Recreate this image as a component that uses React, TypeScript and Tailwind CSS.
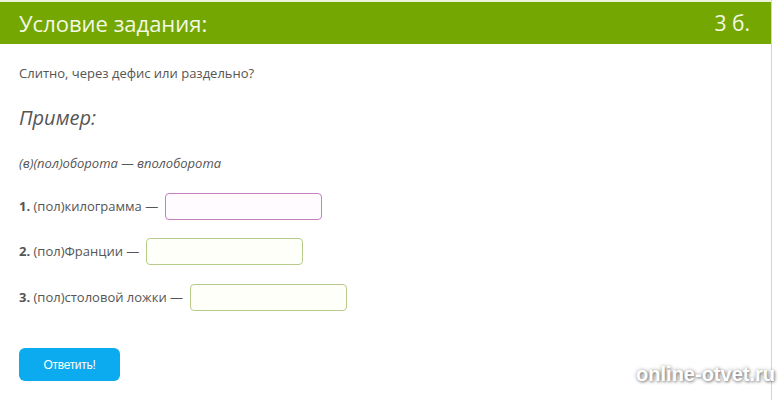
import React from "react";

export default function App() {
  const font = { fontFamily: '"Open Sans", "Noto Sans", sans-serif' };
  return (
    <div className="w-[781px] h-[400px] bg-white relative overflow-hidden" style={font}>
      <div className="w-[772px] h-[400px] border-r border-[#d4d4d4] flex flex-col">
        <div className="h-[2px] bg-[#eef3dc]" />
        <div className="h-[42px] bg-[#74a702] flex items-center justify-between pl-[19px] pr-[21px] text-[#f3f8e6]">
          <span className="text-[22px] leading-none">Условие задания:</span>
          <span className="text-[21px] leading-none">3 б.</span>
        </div>
        <div className="pl-[19px] flex flex-col text-[#555555]">
          <div className="mt-[20px] h-[18px] text-[13px] leading-[18px]">Слитно, через дефис или раздельно?</div>
          <div className="mt-[22px] h-[28px] text-[20px] italic leading-[28px]">Пример:</div>
          <div className="mt-[23px] h-[16px] text-[13px] italic leading-[16px]">(в)(пол)оборота — вполоборота</div>
          <div className="mt-[22px] flex items-center gap-[7px] text-[13px] h-[27px]">
            <span><b className="font-bold">1.</b> (пол)килограмма —</span>
            <div className="w-[157px] h-[27px] rounded-[4px] border border-[#c77fbf] bg-[#fffbfe]" />
          </div>
          <div className="mt-[18px] flex items-center gap-[7px] text-[13px] h-[27px]">
            <span><b className="font-bold">2.</b> (пол)Франции —</span>
            <div className="w-[157px] h-[27px] rounded-[4px] border border-[#b9cb8c] bg-[#fffffa]" />
          </div>
          <div className="mt-[19px] flex items-center gap-[7px] text-[13px] h-[27px]">
            <span><b className="font-bold">3.</b> (пол)столовой ложки —</span>
            <div className="w-[157px] h-[27px] rounded-[4px] border border-[#b9cb8c] bg-[#fffffa]" />
          </div>
          <div className="mt-[37px]">
            <button
              className="w-[101px] h-[33px] rounded-[6px] bg-[#0caaee] text-white text-[12px]"
              style={{ fontFamily: '"Liberation Sans", Arial, sans-serif', letterSpacing: "-0.3px" }}
            >
              Ответить!
            </button>
          </div>
        </div>
      </div>
      <div
        className="absolute right-[6px] top-[364px] text-[20px] font-bold text-white leading-none"
        style={{ fontFamily: '"Liberation Sans", Arial, sans-serif', textShadow: "1px 1px 3px rgba(0,0,0,0.45), 0 0 4px rgba(0,0,0,0.3)" }}
      >
        online-otvet.ru
      </div>
    </div>
  );
}
